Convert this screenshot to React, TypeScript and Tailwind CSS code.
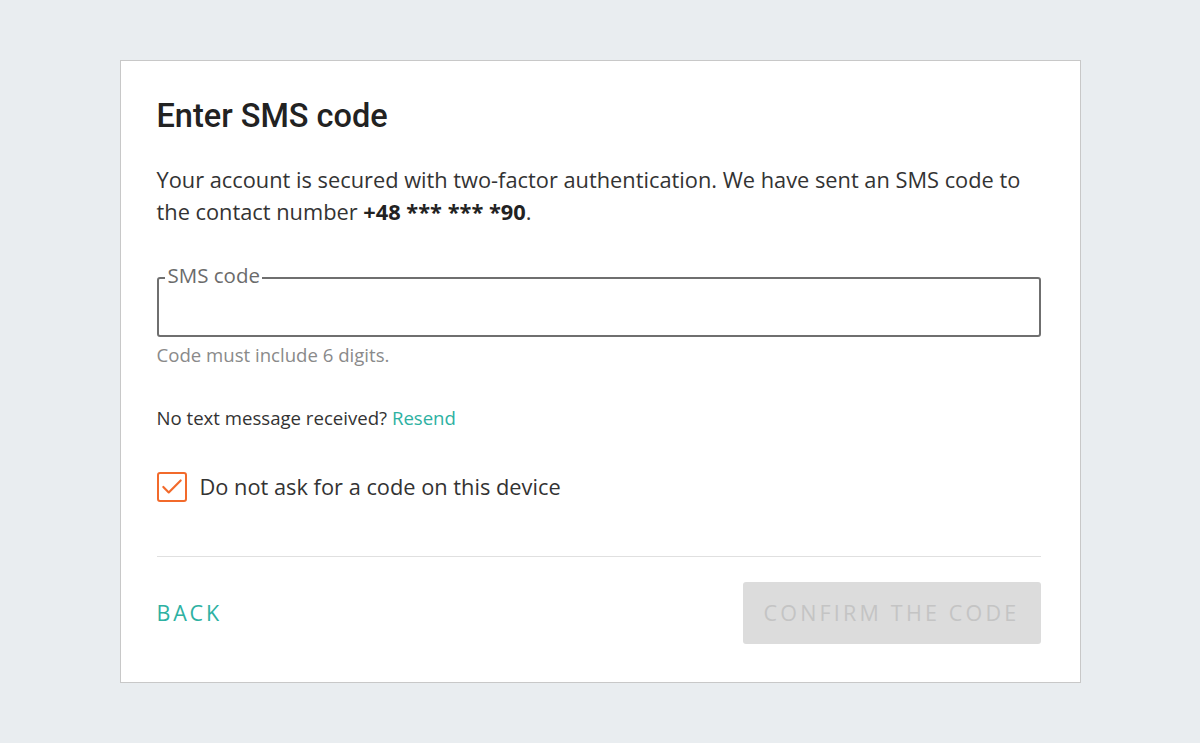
import { Check } from 'lucide-react';

export default function App() {
  return (
    <div className="flex h-[743px] w-full items-center justify-center bg-[#e9edf0] font-['Open_Sans',sans-serif]">
      <div className="w-[961px] border border-[#c8c8c8] bg-white pb-[38px] pl-[36px] pr-[39px] pt-[37px]">
        {/* Title */}
        <h1 className="font-['Roboto',sans-serif] text-[32.5px] font-medium leading-[36px] text-[#222]">
          Enter SMS code
        </h1>

        {/* Description */}
        <p className="mt-[30px] text-[21.8px] leading-[32px] text-[#333]">
          Your account is secured with two-factor authentication. We have sent an SMS code to the contact number{' '}
          <span className="font-bold text-[#222]">+48 *** *** *90</span>.
        </p>

        {/* Code field */}
        <fieldset className="mt-[37px] rounded-[3px] border-2 border-[#6f6f6f] px-[6px] pb-0 pt-0">
          <legend className="pb-[6px] pl-[3px] pr-[2px] text-[20.5px] leading-[20px] text-[#6b6b6b]">SMS code</legend>
          <input
            type="text"
            className="h-[44px] w-full bg-transparent px-[4px] text-[20px] text-[#333] outline-none"
          />
        </fieldset>
        <p className="mt-[6px] text-[18.6px] leading-[24px] text-[#8a8a8a]">Code must include 6 digits.</p>

        <p className="mt-[39px] text-[18.6px] leading-[24px] text-[#333]">
          No text message received? <a className="text-[#2db1a2]">Resend</a>
        </p>

        {/* Remember device */}
        <label className="mt-[42px] flex h-[30px] items-center gap-[13px]">
          <span className="flex h-[30px] w-[30px] items-center justify-center rounded-[3px] border-2 border-[#f26a2b]">
            <Check className="h-[26px] w-[26px] text-[#f26a2b]" strokeWidth={2} />
          </span>
          <span className="text-[21.8px] leading-[30px] text-[#333]">Do not ask for a code on this device</span>
        </label>

        <div className="mt-[54px] h-px bg-[#e0e0e0]" />

        {/* Actions */}
        <div className="mt-[25px] flex items-center justify-between">
          <button className="text-[21.5px] uppercase tracking-[2.8px] text-[#2db1a2]">Back</button>
          <button
            disabled
            className="h-[62px] w-[298px] rounded-[3px] bg-[#dcdcdc] text-[21.5px] uppercase tracking-[3.2px] text-[#c4c4c4]"
          >
            Confirm the code
          </button>
        </div>
      </div>
    </div>
  );
}
